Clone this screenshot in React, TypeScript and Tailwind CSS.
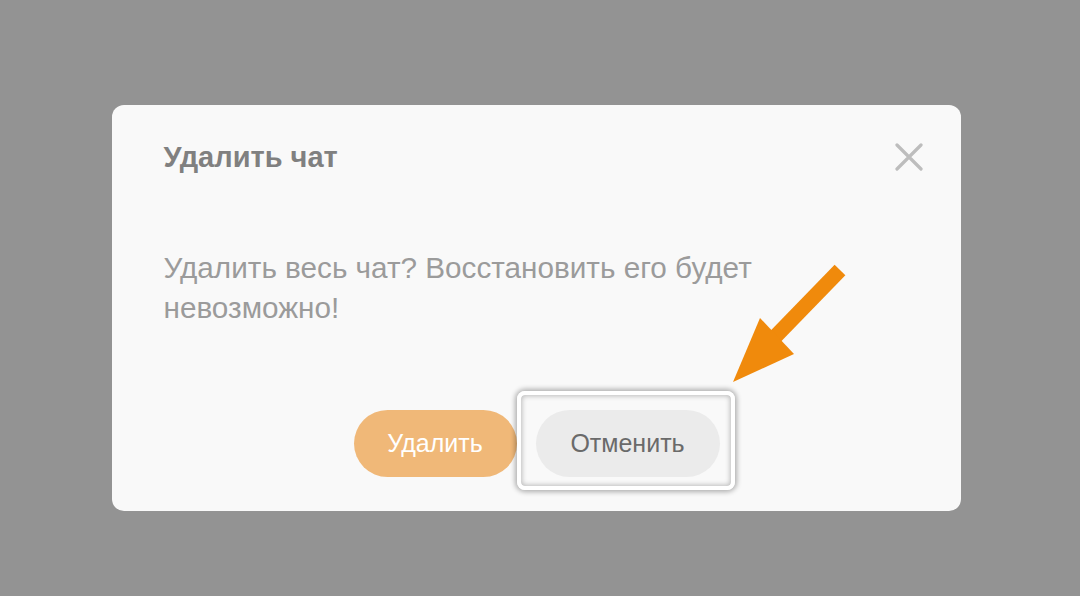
import React from 'react'

function CloseIcon() {
    return (
        <svg width="28" height="28" viewBox="0 0 28 28" className="block">
            <path d="M2 2L26 26M26 2L2 26" stroke="#bdbdbd" strokeWidth="3.2" strokeLinecap="round" />
        </svg>
    )
}

function Arrow() {
    return (
        <svg
            className="absolute left-[725px] top-[255px] pointer-events-none"
            width="130"
            height="135"
            viewBox="725 255 130 135"
        >
            <path d="M840 270L772 340" stroke="#f08a0c" strokeWidth="15" strokeLinecap="butt" />
            <polygon points="733,382 760,318 794,354" fill="#f08a0c" />
        </svg>
    )
}

export default function App() {
    return (
        <div
            className="relative w-full h-[596px] bg-[#939393] flex justify-center overflow-hidden"
            style={{ fontFamily: '"Liberation Sans", Arial, sans-serif' }}
        >
            <div className="mt-[105px] ml-[-8px] w-[849px] h-[406px] rounded-[12px] bg-[#f9f9f9] flex flex-col pl-[52px] pr-[51px]">
                <h2 className="mt-[35px] text-[29px] leading-[34px] font-bold text-[#808080]">Удалить чат</h2>
                <p className="mt-[74px] text-[29.7px] leading-[40px] text-[#9b9b9b] w-[640px]">
                    Удалить весь чат? Восстановить его будет невозможно!
                </p>
                <div className="mt-auto mb-[34px] flex justify-center gap-[19px]">
                    <button className="w-[163px] h-[67px] rounded-full bg-[#f0b878] text-white text-[25px]">
                        Удалить
                    </button>
                    <button className="w-[184px] h-[67px] rounded-full bg-[#ebebeb] text-[#6a6a6a] text-[25px]">
                        Отменить
                    </button>
                </div>
            </div>
            <div className="absolute left-[895px] top-[143px]">
                <CloseIcon />
            </div>
            <div className="absolute left-[517px] top-[391px] w-[218px] h-[99px] rounded-[8px] border-[4px] border-white shadow-[0_0_5px_2px_rgba(0,0,0,0.3),inset_0_0_5px_1px_rgba(0,0,0,0.25)] pointer-events-none" />
            <Arrow />
        </div>
    )
}
